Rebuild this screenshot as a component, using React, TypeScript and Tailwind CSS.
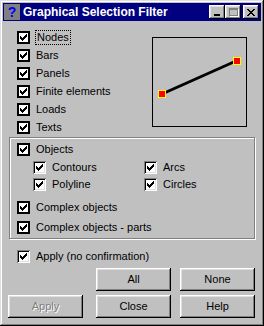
import React from "react";

const CHECK = ["......X", ".....XX", "X...XXX", "XX.XXX.", "XXXXX..", ".XXX...", "..X...."];

function CheckMark() {
  const cells: React.ReactElement[] = [];
  CHECK.forEach((row, y) =>
    row.split("").forEach((c, x) => {
      if (c === "X") cells.push(<rect key={`${x}-${y}`} x={x} y={y} width="1" height="1" fill="#000" />);
    })
  );
  return (
    <svg width="7" height="7" viewBox="0 0 7 7" shapeRendering="crispEdges" className="block">
      {cells}
    </svg>
  );
}

function Check({ label, sunken, focus }: { label: string; sunken?: boolean; focus?: boolean }) {
  return (
    <div className="flex h-[13px] items-center">
      {sunken ? (
        <span className="flex h-[13px] w-[13px] shrink-0 items-center justify-center bg-white shadow-[inset_1px_1px_#808080,inset_-1px_-1px_#fff,inset_2px_2px_#000,inset_-2px_-2px_#dfdfdf]">
          <CheckMark />
        </span>
      ) : (
        <span className="flex h-[13px] w-[13px] shrink-0 items-center justify-center border-2 border-black bg-white">
          <CheckMark />
        </span>
      )}
      <span
        className={
          focus
            ? "ml-[5px] border border-dotted border-black px-[1px] leading-[13px]"
            : "ml-[6px] leading-[13px]"
        }
      >
        {label}
      </span>
    </div>
  );
}

function Button({ label, disabled }: { label: string; disabled?: boolean }) {
  return (
    <div className="flex h-[23px] w-[75px] items-center justify-center bg-[#c0c0c0] shadow-[inset_-1px_-1px_#000,inset_1px_1px_#fff,inset_-2px_-2px_#808080,inset_2px_2px_#dfdfdf]">
      <span className={disabled ? "text-[#808080] [text-shadow:1px_1px_0_#fff]" : ""}>{label}</span>
    </div>
  );
}

function TitleButton({ children }: { children: React.ReactNode }) {
  return (
    <div className="flex h-[14px] w-[16px] items-center justify-center bg-[#c0c0c0] shadow-[inset_-1px_-1px_#000,inset_1px_1px_#fff,inset_-2px_-2px_#808080,inset_2px_2px_#dfdfdf]">
      {children}
    </div>
  );
}

export default function App() {
  return (
    <div className="h-[326px] w-[264px] bg-[#c0c0c0] p-[3px] font-['Liberation_Sans',Arial,sans-serif] text-[11px] text-black shadow-[inset_-1px_-1px_#000,inset_1px_1px_#dfdfdf,inset_-2px_-2px_#808080,inset_2px_2px_#fff]">
      {/* title bar */}
      <div className="flex h-[18px] items-center bg-[#000080] pl-[1px] pr-[2px]">
        <div className="flex h-[16px] w-[16px] items-center justify-center bg-[#808080] text-[14px] font-bold leading-none text-[#0000ff]">
          ?
        </div>
        <span className="ml-[3px] text-[12px] font-bold text-white">Graphical Selection Filter</span>
        <div className="ml-auto flex items-center">
          <TitleButton>
            <span className="mt-[5px] h-[2px] w-[6px] bg-black" />
          </TitleButton>
          <TitleButton>
            <span className="h-[8px] w-[9px] border border-t-2 border-[#808080] shadow-[1px_1px_#fff]" />
          </TitleButton>
          <div className="ml-[2px]">
            <TitleButton>
              <svg width="8" height="7" viewBox="0 0 8 7" shapeRendering="crispEdges">
                <path d="M0 0h2v1h1v1h2v-1h1v-1h2v1h-1v1h-1v1h-1v1h1v1h1v1h1v1h-2v-1h-1v-1h-2v1h-1v1h-2v-1h1v-1h1v-1h1v-1h-1v-1h-1z" fill="#000" />
              </svg>
            </TitleButton>
          </div>
        </div>
      </div>

      {/* top section */}
      <div className="flex">
        <div className="flex flex-col gap-[5px] pl-[14px] pt-[10px]">
          <Check label="Nodes" focus />
          <Check label="Bars" />
          <Check label="Panels" />
          <Check label="Finite elements" />
          <Check label="Loads" />
          <Check label="Texts" />
        </div>
        <div className="ml-auto mr-[14px] mt-[16px] h-[90px] w-[95px] border border-black">
          <svg width="93" height="88" viewBox="0 0 93 88" className="block">
            <line x1="9" y1="56" x2="83" y2="23" stroke="#000" strokeWidth="3" />
            <rect x="5.5" y="52.5" width="7" height="7" fill="#ff0000" stroke="#ffff00" />
            <rect x="80.5" y="19.5" width="7" height="7" fill="#ff0000" stroke="#ffff00" />
          </svg>
        </div>
      </div>

      {/* objects group */}
      <div className="ml-[6px] mr-[6px] mt-[3px] h-[102px] border border-[#808080] pl-[7px] pt-[5px] shadow-[inset_1px_1px_#fff,1px_1px_#fff]">
        <Check label="Objects" />
        <div className="mt-[5px] grid grid-cols-[111px_1fr] gap-y-[4px] pl-[16px]">
          <Check label="Contours" sunken />
          <Check label="Arcs" sunken />
          <Check label="Polyline" sunken />
          <Check label="Circles" sunken />
        </div>
        <div className="mt-[10px] flex flex-col gap-[7px]">
          <Check label="Complex objects" />
          <Check label="Complex objects - parts" />
        </div>
      </div>

      <div className="mt-[11px] pl-[14px]">
        <Check label="Apply (no confirmation)" sunken />
      </div>

      {/* buttons */}
      <div className="mt-[5px] flex flex-col gap-[4px] pl-[5px]">
        <div className="flex gap-[9px] pl-[88px]">
          <Button label="All" />
          <Button label="None" />
        </div>
        <div className="flex gap-[13px]">
          <Button label="Apply" disabled />
          <div className="flex gap-[9px]">
            <Button label="Close" />
            <Button label="Help" />
          </div>
        </div>
      </div>
    </div>
  );
}
